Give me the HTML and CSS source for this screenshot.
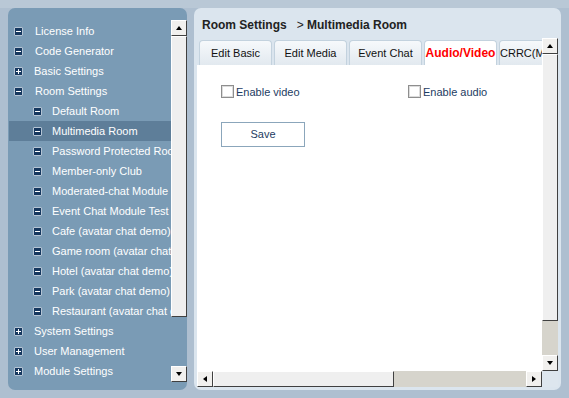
FILE: index.html
```html
<!DOCTYPE html>
<html>
<head>
<meta charset="utf-8">
<link rel="stylesheet" href="styles.css">
</head>
<body>
<div class="page">
  <div class="side">
    <ul class="tree">
      <li class="row top"><span class="ic minus"></span><span class="lbl">License Info</span></li>
      <li class="row top"><span class="ic minus"></span><span class="lbl">Code Generator</span></li>
      <li class="row top"><span class="ic plus"></span><span class="lbl plbl">Basic Settings</span></li>
      <li class="row top"><span class="ic minus"></span><span class="lbl">Room Settings</span></li>
      <li class="row sub"><span class="ic minus"></span><span class="lbl">Default Room</span></li>
      <li class="row sub sel"><span class="ic minus"></span><span class="lbl">Multimedia Room</span></li>
      <li class="row sub"><span class="ic minus"></span><span class="lbl">Password Protected Room</span></li>
      <li class="row sub"><span class="ic minus"></span><span class="lbl">Member-only Club</span></li>
      <li class="row sub"><span class="ic minus"></span><span class="lbl">Moderated-chat Module</span></li>
      <li class="row sub"><span class="ic minus"></span><span class="lbl">Event Chat Module Test</span></li>
      <li class="row sub"><span class="ic minus"></span><span class="lbl">Cafe (avatar chat demo)</span></li>
      <li class="row sub"><span class="ic minus"></span><span class="lbl">Game room (avatar chat demo)</span></li>
      <li class="row sub"><span class="ic minus"></span><span class="lbl">Hotel (avatar chat demo)</span></li>
      <li class="row sub"><span class="ic minus"></span><span class="lbl">Park (avatar chat demo)</span></li>
      <li class="row sub"><span class="ic minus"></span><span class="lbl">Restaurant (avatar chat demo)</span></li>
      <li class="row top"><span class="ic plus"></span><span class="lbl plbl">System Settings</span></li>
      <li class="row top"><span class="ic plus"></span><span class="lbl plbl">User Management</span></li>
      <li class="row top"><span class="ic plus"></span><span class="lbl plbl">Module Settings</span></li>
    </ul>
    <div class="vbar side-bar">
      <div class="btn"><span class="arr up"></span></div>
      <div class="thumb vthumb side-thumb"></div>
      <div class="track clear"></div>
      <div class="btn"><span class="arr down"></span></div>
    </div>
  </div>

  <div class="main">
    <div class="head"><b>Room Settings</b><span class="crumb">&gt; <b>Multimedia Room</b></span></div>
    <div class="frame">
      <div class="content">
        <div class="tabs">
          <div class="tab">Edit Basic</div>
          <div class="tab">Edit Media</div>
          <div class="tab">Event Chat</div>
          <div class="tab active">Audio/Video</div>
          <div class="tab">CRRC(Mobile)</div>
        </div>
        <div class="pane">
          <div class="checks">
            <label class="chk"><span class="box"></span>Enable video</label>
            <label class="chk"><span class="box"></span>Enable audio</label>
          </div>
          <div class="save">Save</div>
        </div>
      </div>
      <div class="vbar">
        <div class="btn"><span class="arr up"></span></div>
        <div class="thumb vthumb main-thumb"></div>
        <div class="track"></div>
        <div class="btn"><span class="arr down"></span></div>
      </div>
      <div class="hbar">
        <div class="btn"><span class="arr left"></span></div>
        <div class="thumb hthumb"></div>
        <div class="track"></div>
        <div class="btn"><span class="arr right"></span></div>
      </div>
      <div class="corner"></div>
    </div>
  </div>
</div>
</body>
</html>
```

FILE: styles.css
```css
* { box-sizing: border-box; margin: 0; padding: 0; }
html, body { width: 569px; height: 398px; overflow: hidden; }
body {
  background: #aebfd0;
  font-family: "Liberation Sans", Arial, sans-serif;
  font-size: 11px;
}
.page {
  display: flex;
  gap: 7px;
  padding: 8px 8px 0 8px;
  height: 390px;
  background: linear-gradient(#b9c8d6 0, #b9c8d6 8px, #aebfd0 8px);
}
.side {
  width: 179px;
  height: 382px;
  background: #7a9bb5;
  border-radius: 7px;
  display: flex;
  overflow: hidden;
}
.tree {
  list-style: none;
  padding-top: 13px;
  width: 163px;
  margin-left: 1px;
  overflow: hidden;
}
.row {
  height: 20px;
  display: flex;
  align-items: center;
  white-space: nowrap;
  color: #ffffff;
}
.row.top { padding-left: 5px; }
.row.sub { padding-left: 24px; }
.row.sel { background: #5e7e99; }
.ic {
  flex: none;
  width: 9px;
  height: 9px;
  background: #16385f;
  border: 1px solid #b4c4d4;
  border-radius: 1px;
  position: relative;
}
.ic::before {
  content: "";
  position: absolute;
  left: 1px; top: 3px;
  width: 5px; height: 1px;
  background: #fff;
}
.ic.plus::after {
  content: "";
  position: absolute;
  left: 3px; top: 1px;
  width: 1px; height: 5px;
  background: #fff;
}
.row.top .lbl { margin-left: 12px; }
.row.top .plbl { margin-left: 11px; }
.row.sub .lbl { margin-left: 10px; }

.vbar {
  display: flex;
  flex-direction: column;
  width: 16px;
}
.side-bar { margin-top: 12px; margin-bottom: 8px; }
.btn {
  flex: none;
  width: 16px;
  height: 16px;
  background: #f1f0ee;
  border: 1px solid #ffffff;
  border-right-color: #404040;
  border-bottom-color: #404040;
  display: flex;
  align-items: center;
  justify-content: center;
}
.hbar .btn { width: 16px; height: 16px; }
.thumb {
  background: #efefef;
  border: 1px solid #ffffff;
  border-right-color: #404040;
  border-bottom-color: #404040;
}
.side-thumb { height: 281px; }
.main-thumb { height: 267px; }
.track { flex: 1; background: #d6d4cc; }
.track.clear { background: transparent; }
.arr { width: 0; height: 0; border: 3px solid transparent; }
.arr.up { border-bottom: 4px solid #000; border-top: 0; }
.arr.down { border-top: 4px solid #000; border-bottom: 0; }
.arr.left { border-right: 4px solid #000; border-left: 0; }
.arr.right { border-left: 4px solid #000; border-right: 0; }

.main {
  width: 367px;
  height: 382px;
  background: #dbe5ee;
  border-radius: 7px;
  display: flex;
  flex-direction: column;
  padding: 0 3px 3px 3px;
}
.head {
  height: 30px;
  padding: 10px 0 0 5px;
  font-size: 12px;
  line-height: 14px;
  color: #222;
  white-space: nowrap;
}
.crumb { margin-left: 10px; }
.frame {
  flex: 1;
  display: grid;
  grid-template-columns: 345px 16px;
  grid-template-rows: 1fr 16px;
  overflow: hidden;
}
.content {
  display: flex;
  flex-direction: column;
  overflow: hidden;
}
.tabs {
  height: 27px;
  display: flex;
  align-items: flex-end;
  gap: 2px;
  padding-left: 2px;
  overflow: hidden;
}
.tab {
  flex: none;
  width: 73px;
  height: 25px;
  border: 1px solid #c3d2de;
  border-bottom: 0;
  border-radius: 4px 4px 0 0;
  background: linear-gradient(#f6f9fb, #e2e9ef);
  color: #111;
  text-align: center;
  line-height: 24px;
  white-space: nowrap;
  overflow: hidden;
}
.tab.active {
  background: #ffffff;
  color: #ff0000;
  font-weight: bold;
  font-size: 12px;
}
.pane {
  flex: 1;
  background: #ffffff;
  padding: 20px 0 0 24px;
}
.checks {
  display: grid;
  grid-template-columns: 187px 1fr;
}
.chk {
  display: flex;
  align-items: center;
  height: 13px;
  color: #1d3c62;
  white-space: nowrap;
}
.box {
  width: 13px;
  height: 13px;
  border: 1px solid #8e8e8e;
  box-shadow: inset 0 0 0 1px #dcdcdc;
  background: #fff;
  margin-right: 2px;
}
.save {
  margin-top: 24px;
  width: 84px;
  height: 25px;
  border: 1px solid #8ba6bb;
  color: #1d3c62;
  text-align: center;
  line-height: 23px;
}
.hbar {
  display: flex;
  height: 16px;
}
.hthumb { width: 181px; }
.corner { background: #dde6ee; }
```
